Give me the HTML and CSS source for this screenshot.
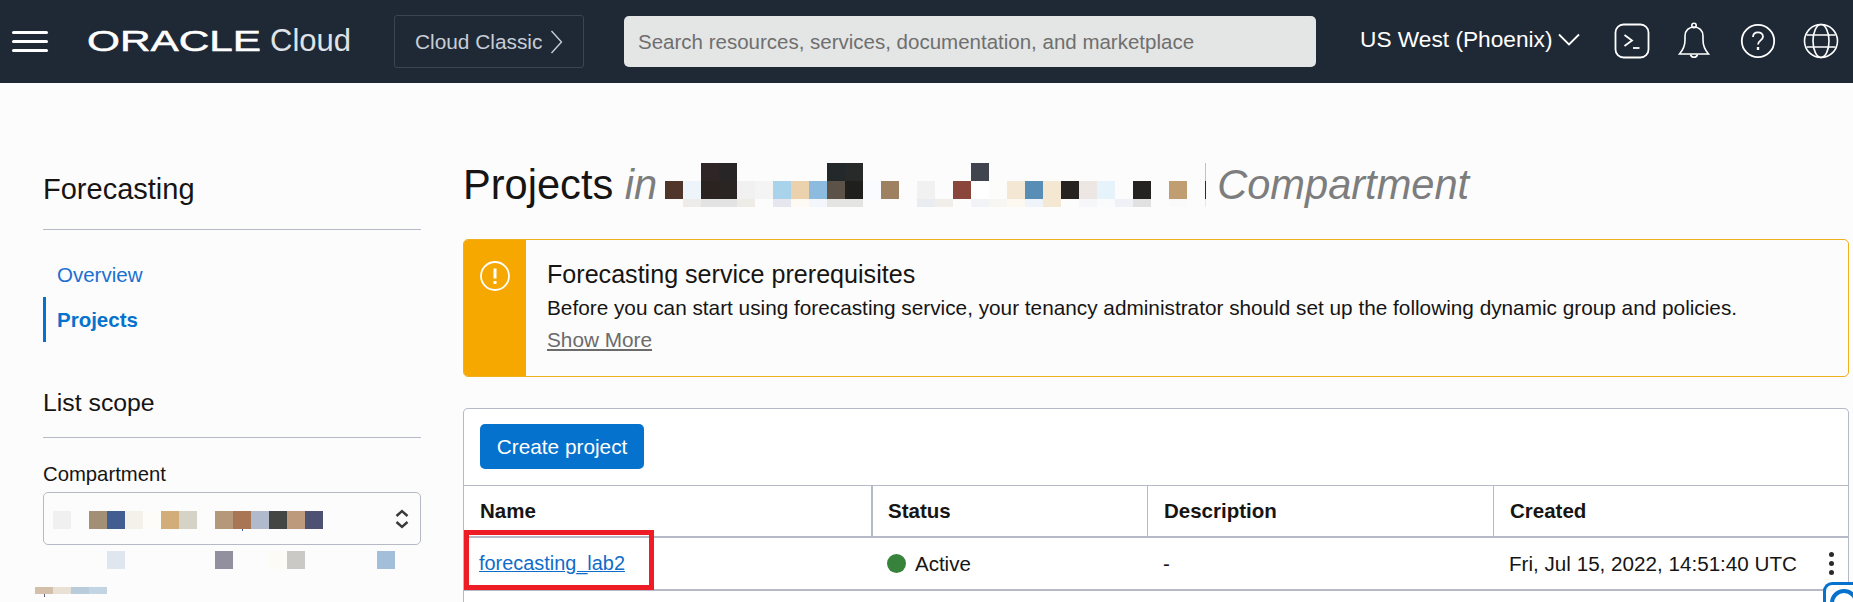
FILE: index.html
```html
<!DOCTYPE html>
<html lang="en">

<head>
    <meta charset="UTF-8">
    <title>Projects - Forecasting</title>
    <link rel="stylesheet" href="styles.css">
</head>

<body>
    <header class="topbar">
        <button class="burger" aria-label="Menu"><span></span><span></span><span></span></button>
        <a class="brand"><span class="brand-oracle">ORACLE</span><span class="brand-cloud">Cloud</span></a>
        <a class="classic">Cloud Classic
            <svg width="13" height="24" viewBox="0 0 13 24"><path d="M1.5 1 11.5 12 1.5 23" fill="none" stroke="#c7ced6" stroke-width="1.4"/></svg>
        </a>
        <div class="search">Search resources, services, documentation, and marketplace</div>
        <a class="region">US West (Phoenix)
            <svg width="22" height="13" viewBox="0 0 22 13"><path d="M1 1.5 11 11.5 21 1.5" fill="none" stroke="#fff" stroke-width="1.8"/></svg>
        </a>
        <div class="tools">
            <svg width="36" height="36" viewBox="0 0 36 36" fill="none" stroke="#fff" stroke-width="1.8"><rect x="1.5" y="1.5" width="33" height="33" rx="8"/><path d="M10.500 12 18 17.500 10.500 23"/><path d="M19 25H25.500"/></svg>
            <svg width="32" height="38" viewBox="0 0 32 38" fill="none" stroke="#fff" stroke-width="1.6"><path d="M1.500 32C5 28 7 24 7 18V14C7 8.500 11 5 16 5S25 8.500 25 14V18C25 24 27 28 30.500 32Z"/><circle cx="16" cy="3.500" r="2.200"/><path d="M12.500 32.500A3.600 3.600 0 0 0 19.500 32.500"/></svg>
            <svg class="tool-help" width="36" height="36" viewBox="0 0 36 36" fill="none" stroke="#fff" stroke-width="1.8"><circle cx="18" cy="18" r="16.200"/><path d="M13 14C13 10.800 15.300 9.300 18 9.300S23 11 23 13.800C23 17.300 18 17.500 18 21.500"/><path d="M18 24V27" stroke-width="2.400"/></svg>
            <svg width="36" height="36" viewBox="0 0 36 36" fill="none" stroke="#fff" stroke-width="1.6"><circle cx="18" cy="18" r="16.500"/><ellipse cx="18" cy="18" rx="8" ry="16.500"/><path d="M3.500 12H32.500M3.500 24H32.500"/></svg>
        </div>
    </header>

    <div class="page">
        <aside class="sidebar">
            <h2 class="side-title">Forecasting</h2>
            <nav class="side-nav">
                <a class="side-link">Overview</a>
                <a class="side-link active">Projects</a>
            </nav>
            <h3 class="scope-title">List scope</h3>
            <label class="field-label">Compartment</label>
            <div class="select">
                <svg class="blur" width="270" height="20" viewBox="53 0 270 20">
                    <rect x="53" width="18" height="18" fill="#f0f0f0"/>
                    <rect x="89" width="18" height="18" fill="#a28f75"/>
                    <rect x="107" width="18" height="18" fill="#425d8f"/>
                    <rect x="125" width="18" height="18" fill="#f4f1ea"/>
                    <rect x="143" width="18" height="18" fill="#fdfcf8"/>
                    <rect x="161" width="18" height="18" fill="#d2ac79"/>
                    <rect x="179" width="18" height="18" fill="#d5d3c6"/>
                    <rect x="215" width="18" height="18" fill="#b59779"/>
                    <rect x="233" width="18" height="18" fill="#a87655"/>
                    <rect x="251" width="18" height="18" fill="#b0bacc"/>
                    <rect x="269" width="18" height="18" fill="#444644"/>
                    <rect x="287" width="18" height="18" fill="#bd9a7b"/>
                    <rect x="305" width="18" height="18" fill="#4e5272"/>
                    <rect x="242" y="18" width="1" height="2" fill="#3b5fa0"/>
                </svg>
                <svg class="updown" width="14" height="20" viewBox="0 0 14 20" fill="none" stroke="#3a3a3a" stroke-width="2.400"><path d="M1.500 7 7 2 12.500 7M1.500 13 7 18 12.500 13"/></svg>
            </div>
            <svg class="blur-under" width="378" height="46" viewBox="35 0 378 46">
                <rect x="107" width="18" height="18" fill="#dfe6ef"/>
                <rect x="215" width="18" height="18" fill="#928f9f"/>
                <rect x="269" width="18" height="18" fill="#fcfbf6"/>
                <rect x="287" width="18" height="18" fill="#cbc9c6"/>
                <rect x="377" width="18" height="18" fill="#a3bed8"/>
                <rect x="35" y="36" width="18" height="7" fill="#d3bfaa"/>
                <rect x="53" y="36" width="18" height="7" fill="#e9e1d4"/>
                <rect x="71" y="36" width="18" height="7" fill="#b8ccdc"/>
                <rect x="89" y="36" width="18" height="7" fill="#c3d5e2"/>
                <rect x="44" y="43" width="1" height="3" fill="#6a5f7a"/>
            </svg>
        </aside>

        <main class="content">
            <h1 class="page-title">Projects <em>in</em>
                <svg class="blur" width="541" height="44" viewBox="665 0 541 44">
                    <rect x="701" width="18" height="18" fill="#2f2527"/>
                    <rect x="719" width="18" height="18" fill="#272525"/>
                    <rect x="827" width="18" height="18" fill="#23282a"/>
                    <rect x="845" width="18" height="18" fill="#272a29"/>
                    <rect x="971" width="18" height="18" fill="#3f444e"/>
                    <rect x="665" y="18" width="18" height="18" fill="#50362a"/>
                    <rect x="683" y="18" width="18" height="18" fill="#eef5fa"/>
                    <rect x="701" y="18" width="18" height="18" fill="#2a2320"/>
                    <rect x="719" y="18" width="18" height="18" fill="#2a2522"/>
                    <rect x="737" y="18" width="18" height="18" fill="#f1f1f1"/>
                    <rect x="755" y="18" width="18" height="18" fill="#f4f4f4"/>
                    <rect x="773" y="18" width="18" height="18" fill="#a9d3eb"/>
                    <rect x="791" y="18" width="18" height="18" fill="#ebd1ac"/>
                    <rect x="809" y="18" width="18" height="18" fill="#8dbbe0"/>
                    <rect x="827" y="18" width="18" height="18" fill="#5c5248"/>
                    <rect x="845" y="18" width="18" height="18" fill="#1f1f1d"/>
                    <rect x="863" y="18" width="18" height="18" fill="#f9fbfe"/>
                    <rect x="881" y="18" width="18" height="18" fill="#9e8160"/>
                    <rect x="917" y="18" width="18" height="18" fill="#f1f1f1"/>
                    <rect x="953" y="18" width="18" height="18" fill="#8b463b"/>
                    <rect x="971" y="18" width="18" height="18" fill="#fff"/>
                    <rect x="989" y="18" width="18" height="18" fill="#fcfcfa"/>
                    <rect x="1007" y="18" width="18" height="18" fill="#f4e8d4"/>
                    <rect x="1025" y="18" width="18" height="18" fill="#588eb6"/>
                    <rect x="1043" y="18" width="18" height="18" fill="#f4e8d2"/>
                    <rect x="1061" y="18" width="18" height="18" fill="#272320"/>
                    <rect x="1079" y="18" width="18" height="18" fill="#ece7e3"/>
                    <rect x="1097" y="18" width="18" height="18" fill="#e6f3fb"/>
                    <rect x="1133" y="18" width="18" height="18" fill="#242321"/>
                    <rect x="1151" y="18" width="18" height="18" fill="#fcfcfc"/>
                    <rect x="1169" y="18" width="18" height="18" fill="#c19e72"/>
                    <rect x="683" y="36" width="18" height="8" fill="#efebe8"/>
                    <rect x="701" y="36" width="36" height="8" fill="#e3e3e3"/>
                    <rect x="737" y="36" width="18" height="8" fill="#efece8"/>
                    <rect x="773" y="36" width="18" height="8" fill="#e6e6ef"/>
                    <rect x="791" y="36" width="18" height="8" fill="#fdf9f3"/>
                    <rect x="809" y="36" width="18" height="8" fill="#f3f7fc"/>
                    <rect x="827" y="36" width="36" height="8" fill="#e4e4e3"/>
                    <rect x="917" y="36" width="18" height="8" fill="#e9ecf0"/>
                    <rect x="935" y="36" width="18" height="8" fill="#f1eeea"/>
                    <rect x="971" y="36" width="18" height="8" fill="#f2f3f6"/>
                    <rect x="989" y="36" width="18" height="8" fill="#f8f6f2"/>
                    <rect x="1007" y="36" width="18" height="8" fill="#fdf9f1"/>
                    <rect x="1025" y="36" width="18" height="8" fill="#eff4fa"/>
                    <rect x="1043" y="36" width="18" height="8" fill="#f4e8d2"/>
                    <rect x="1079" y="36" width="18" height="8" fill="#f7f7fa"/>
                    <rect x="1097" y="36" width="18" height="8" fill="#f9fbfc"/>
                    <rect x="1115" y="36" width="18" height="8" fill="#eef1f6"/>
                    <rect x="1133" y="36" width="18" height="8" fill="#e1e1e1"/>
                    <rect x="1169" y="36" width="18" height="8" fill="#fafafa"/>
                    <rect x="1205" y="0" width="1" height="18" fill="#c9c0b8"/>
                    <rect x="1205" y="18" width="1" height="18" fill="#2a2a2a"/>
                    <rect x="1205" y="36" width="1" height="8" fill="#e8e8e8"/>
                </svg>
                <em>Compartment</em>
            </h1>

            <section class="alert">
                <div class="alert-side">
                    <svg width="30" height="30" viewBox="0 0 30 30" fill="none" stroke="#fff" stroke-width="1.800"><circle cx="15" cy="15" r="14"/><path d="M15 7.500V17.500" stroke-width="3"/><path d="M15 20V23" stroke-width="3"/></svg>
                </div>
                <div class="alert-body">
                    <h4>Forecasting service prerequisites</h4>
                    <p>Before you can start using forecasting service, your tenancy administrator should set up the following dynamic group and policies.</p>
                    <a class="show-more">Show More</a>
                </div>
            </section>

            <section class="card">
                <div class="card-actions">
                    <button class="btn-primary">Create project</button>
                </div>
                <div class="grid-row grid-head">
                    <div class="cell">Name</div>
                    <div class="cell">Status</div>
                    <div class="cell">Description</div>
                    <div class="cell">Created</div>
                </div>
                <div class="grid-row">
                    <div class="cell"><a class="row-link">forecasting_lab2</a></div>
                    <div class="cell status"><span class="dot"></span>Active</div>
                    <div class="cell">-</div>
                    <div class="cell created">Fri, Jul 15, 2022, 14:51:40 UTC
                        <span class="kebab"><i></i><i></i><i></i></span>
                    </div>
                </div>
                <div class="callout"></div>
            </section>
        </main>
    </div>

    <div class="help-tab">
        <svg width="30" height="20" viewBox="0 0 30 20" fill="none" stroke="#0572ce" stroke-width="4"><circle cx="18" cy="18" r="12"/></svg>
    </div>
</body>

</html>
```

FILE: styles.css
```css
* {
    box-sizing: border-box;
}

html, body {
    height: 100%;
}

body {
    margin: 0;
    background-color: #fcfcfd;
    color: #161513;
    font-family: "Liberation Sans", Arial, sans-serif;
    font-size: 20.5px;
    overflow: hidden;
    position: relative;
}

/* top bar */
.topbar {
    height: 83px;
    background-color: #1f2936;
    display: flex;
    align-items: center;
    color: #fff;
}

.burger {
    width: 36px;
    height: 21px;
    margin: 0 0 0 12px;
    padding: 0;
    border: none;
    background: none;
    display: flex;
    flex-direction: column;
    justify-content: space-between;
}

.burger span {
    height: 3px;
    background-color: #fff;
    border-radius: 2px;
}

.brand {
    width: 270px;
    margin-left: 39px;
    height: 30px;
    display: flex;
    align-items: center;
    flex: none;
    margin-top: -2px;
}

.brand-oracle {
    display: inline-block;
    font-size: 29px;
    line-height: 30px;
    width: 119px;
    transform: scaleX(1.46);
    transform-origin: left center;
    -webkit-text-stroke: .5px #fff;
}

.brand-cloud {
    display: inline-block;
    margin-left: 64px;
    font-size: 31px;
    line-height: 30px;
    color: #dfe3e7;
}

.classic {
    width: 190px;
    height: 53px;
    margin-left: 37px;
    flex: none;
    border: 1px solid #3a4552;
    border-radius: 3px;
    display: flex;
    align-items: center;
    gap: 8px;
    padding-left: 20px;
    color: #c7ced6;
    font-size: 20.85px;
}

.search {
    width: 692px;
    height: 51px;
    margin-left: 40px;
    margin-top: -1px;
    flex: none;
    padding-left: 14px;
    background-color: #e4e5e5;
    border-radius: 5px;
    line-height: 51px;
    color: #6f6f6f;
}

.region {
    margin-left: 44px;
    flex: none;
    display: flex;
    align-items: center;
    gap: 5px;
    font-size: 22.7px;
    margin-top: -4px;
}

.tools {
    margin-left: 34px;
    display: flex;
    align-items: center;
    gap: 28px;
    margin-top: -1px;
}

.tool-help {
    margin-left: 2px;
    margin-right: -1px;
}

/* page */
.page {
    display: flex;
    padding: 80px 4px 0 43px;
}

.sidebar {
    width: 378px;
    flex: none;
    margin-right: 42px;
}

.side-title {
    margin: 9px 0 0;
    padding-bottom: 23px;
    border-bottom: 1px solid #b6bac6;
    font-size: 29px;
    line-height: 34px;
    font-weight: 400;
}

.side-nav {
    margin-top: 22px;
}

.side-link {
    display: block;
    height: 45px;
    line-height: 45px;
    padding-left: 14px;
    color: #1a6fd0;
}

.side-link.active {
    border-left: 3px solid #0572ce;
    padding-left: 11px;
    font-weight: 700;
    color: #0572ce;
}

.scope-title {
    margin: 44px 0 0;
    padding-bottom: 17px;
    border-bottom: 1px solid #b6bac6;
    font-size: 24.8px;
    line-height: 34px;
    font-weight: 400;
}

.field-label {
    display: block;
    margin-top: 24px;
    line-height: 24px;
    font-size: 20.3px;
}

.select {
    height: 53px;
    margin-top: 6px;
    border: 1px solid #b6bac6;
    border-radius: 5px;
    display: flex;
    align-items: center;
    justify-content: space-between;
    padding: 0 11px 0 9px;
    background-color: #fcfcfd;
}

.blur {
    display: block;
    flex: none;
}

.select .blur {
    margin-top: 5px;
}

.blur-under {
    display: block;
    margin-top: 6px;
    margin-left: -8px;
}

.content {
    flex: 1;
    min-width: 0;
}

.page-title {
    margin: 0 0 32px;
    height: 44px;
    display: flex;
    align-items: center;
    font-size: 41.6px;
    line-height: 44px;
    font-weight: 400;
    white-space: pre;
}

.page-title em {
    color: #7d7d7d;
    font-style: italic;
}

.page-title .blur {
    margin: 0 11px 0 8px;
}

/* warning */
.alert {
    height: 138px;
    border: 1px solid #f0b01e;
    border-radius: 5px;
    display: flex;
    overflow: hidden;
}

.alert-side {
    width: 62px;
    flex: none;
    background-color: #f7a800;
    display: flex;
    justify-content: center;
    padding-top: 21px;
}

.alert-body {
    padding: 17px 0 0 21px;
    font-size: 20.77px;
}

.alert-body h4 {
    margin: 0;
    font-size: 25.1px;
    line-height: 34px;
    font-weight: 400;
}

.alert-body p {
    margin: 1px 0 0;
    line-height: 32px;
}

.show-more {
    display: block;
    margin-top: -1px;
    line-height: 34px;
    color: #6b6b6b;
    text-decoration: underline;
}

/* table */
.card {
    position: relative;
    margin-top: 31px;
    height: 194px;
    background-color: #fff;
    border: 1px solid #b6bac6;
    border-bottom: none;
    border-radius: 5px 5px 0 0;
}

.card-actions {
    height: 76px;
    padding: 15px 0 0 16px;
}

.btn-primary {
    height: 45px;
    width: 164px;
    padding: 0;
    border: none;
    border-radius: 5px;
    background-color: #0572ce;
    color: #fff;
    font-family: inherit;
    font-size: 20.8px;
}

.grid-row {
    display: grid;
    grid-template-columns: 407px 276px 346px 1fr;
    height: 53px;
    border-bottom: 2px solid #b6bac6;
}

.grid-head {
    height: 53px;
    border-top: 1px solid #b6bac6;
    font-weight: 700;
}

.cell {
    display: flex;
    align-items: center;
    padding-left: 16px;
}

.grid-head .cell + .cell {
    border-left: 1px solid #b6bac6;
}

.grid-head .cell:nth-child(2) {
    border-left-width: 2px;
    padding-left: 15px;
}

.status {
    gap: 9px;
}

.dot {
    width: 19px;
    height: 19px;
    border-radius: 50%;
    background-color: #38833c;
}

.row-link {
    color: #0f6cc9;
    text-decoration: underline;
    font-size: 19.9px;
    margin-left: -1px;
}

.created {
    justify-content: space-between;
    padding-right: 14px;
    font-size: 20.65px;
}

.kebab {
    display: flex;
    flex-direction: column;
    gap: 4px;
}

.kebab i {
    width: 5px;
    height: 5px;
    border-radius: 50%;
    background-color: #2a2a2a;
}

/* red box drawn over the screenshot */
.callout {
    position: absolute;
    left: 0;
    top: 121px;
    width: 190px;
    height: 60px;
    border: 5px solid #ee1c25;
}

.help-tab {
    position: absolute;
    right: 0;
    bottom: 0;
    width: 30px;
    height: 20px;
    border: 3px solid #0572ce;
    border-width: 3px 0 0 3px;
    border-radius: 9px 0 0 0;
    background-color: #fff;
    overflow: hidden;
}
```
